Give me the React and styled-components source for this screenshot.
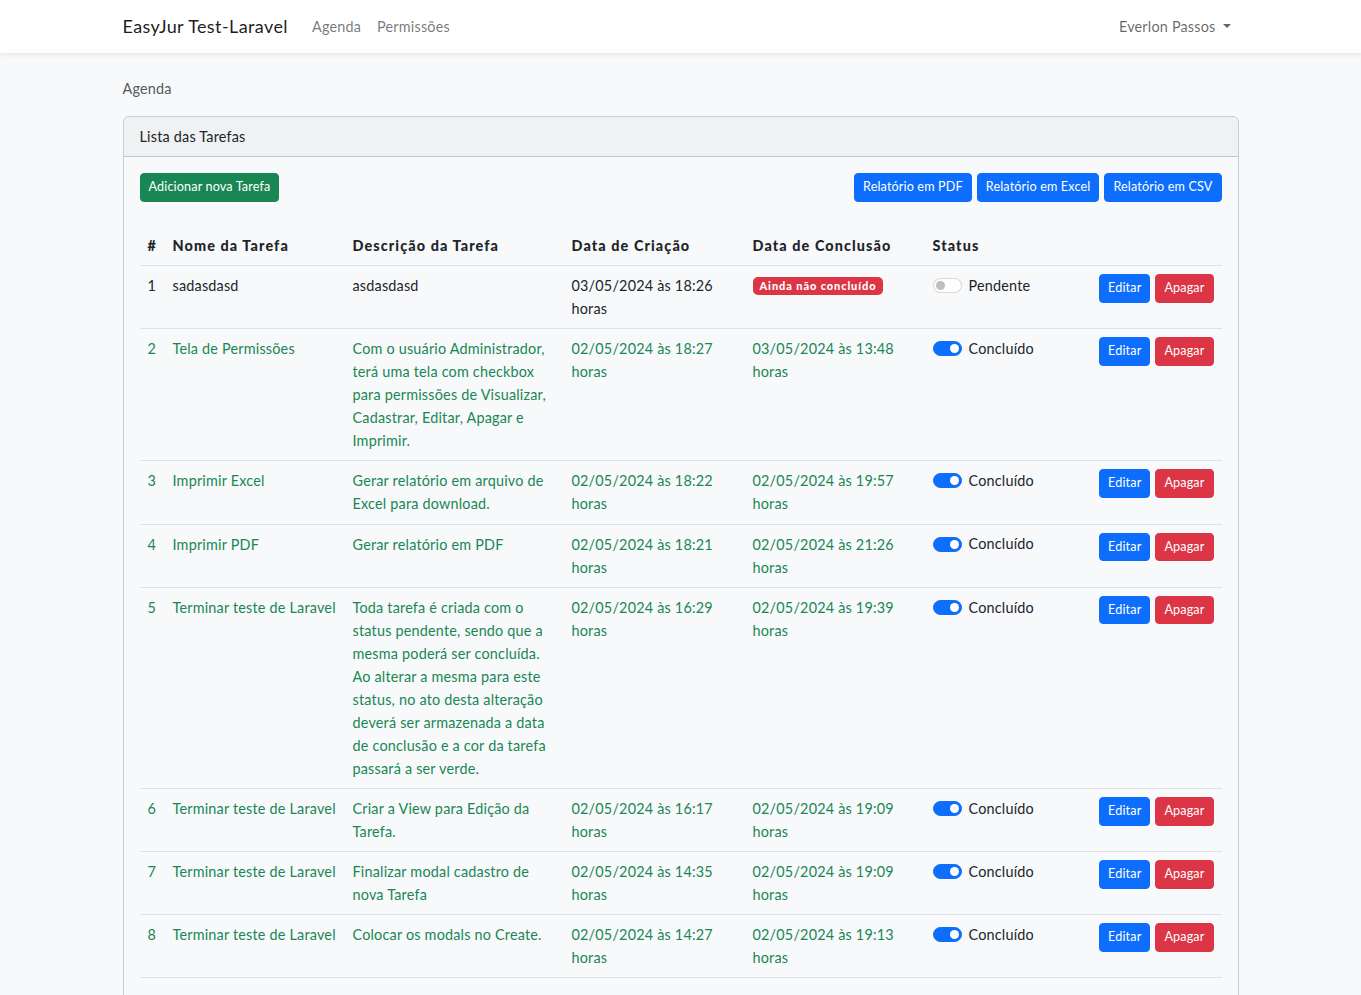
import React from 'react';
import styled, { createGlobalStyle } from 'styled-components';

const tasks = [
  {
    id: 1,
    name: 'sadasdasd',
    description: 'asdasdasd',
    created: '03/05/2024 às 18:26 horas',
    done: false,
  },
  {
    id: 2,
    name: 'Tela de Permissões',
    description:
      'Com o usuário Administrador, terá uma tela com checkbox para permissões de Visualizar, Cadastrar, Editar, Apagar e Imprimir.',
    created: '02/05/2024 às 18:27 horas',
    finished: '03/05/2024 às 13:48 horas',
    done: true,
  },
  {
    id: 3,
    name: 'Imprimir Excel',
    description: 'Gerar relatório em arquivo de Excel para download.',
    created: '02/05/2024 às 18:22 horas',
    finished: '02/05/2024 às 19:57 horas',
    done: true,
  },
  {
    id: 4,
    name: 'Imprimir PDF',
    description: 'Gerar relatório em PDF',
    created: '02/05/2024 às 18:21 horas',
    finished: '02/05/2024 às 21:26 horas',
    done: true,
  },
  {
    id: 5,
    name: 'Terminar teste de Laravel',
    description:
      'Toda tarefa é criada com o status pendente, sendo que a mesma poderá ser concluída. Ao alterar a mesma para este status, no ato desta alteração deverá ser armazenada a data de conclusão e a cor da tarefa passará a ser verde.',
    created: '02/05/2024 às 16:29 horas',
    finished: '02/05/2024 às 19:39 horas',
    done: true,
  },
  {
    id: 6,
    name: 'Terminar teste de Laravel',
    description: 'Criar a View para Edição da Tarefa.',
    created: '02/05/2024 às 16:17 horas',
    finished: '02/05/2024 às 19:09 horas',
    done: true,
  },
  {
    id: 7,
    name: 'Terminar teste de Laravel',
    description: 'Finalizar modal cadastro de nova Tarefa',
    created: '02/05/2024 às 14:35 horas',
    finished: '02/05/2024 às 19:09 horas',
    done: true,
  },
  {
    id: 8,
    name: 'Terminar teste de Laravel',
    description: 'Colocar os modals no Create.',
    created: '02/05/2024 às 14:27 horas',
    finished: '02/05/2024 às 19:13 horas',
    done: true,
  },
];

const App = () => (
  <>
    <GlobalStyle />
    <Navbar>
      <NavContainer>
        <Brand>EasyJur Test-Laravel</Brand>
        <NavLinks>
          <NavLink>Agenda</NavLink>
          <NavLink>Permissões</NavLink>
        </NavLinks>
        <UserMenu>
          Everlon Passos
          <Caret />
        </UserMenu>
      </NavContainer>
    </Navbar>

    <Main>
      <Container>
        <PageLabel>Agenda</PageLabel>
        <Card>
          <CardHeader>Lista das Tarefas</CardHeader>
          <CardBody>
            <Toolbar>
              <Button variant="success">Adicionar nova Tarefa</Button>
              <ButtonGroup>
                <Button>Relatório em PDF</Button>
                <Button>Relatório em Excel</Button>
                <Button>Relatório em CSV</Button>
              </ButtonGroup>
            </Toolbar>

            <Table>
              <colgroup>
                <col style={{ width: 25 }} />
                <col style={{ width: 180 }} />
                <col style={{ width: 219 }} />
                <col style={{ width: 181 }} />
                <col style={{ width: 180 }} />
                <col style={{ width: 165 }} />
                <col />
              </colgroup>
              <thead>
                <tr>
                  <Th>#</Th>
                  <Th>Nome da Tarefa</Th>
                  <Th>Descrição da Tarefa</Th>
                  <Th>Data de Criação</Th>
                  <Th>Data de Conclusão</Th>
                  <Th>Status</Th>
                  <Th />
                </tr>
              </thead>
              <tbody>
                {tasks.map((task) => (
                  <tr key={task.id}>
                    <Td done={task.done}>{task.id}</Td>
                    <Td done={task.done}>{task.name}</Td>
                    <Td done={task.done}>{task.description}</Td>
                    <Td done={task.done}>{task.created}</Td>
                    <Td done={task.done}>
                      {task.done ? task.finished : <Badge>Ainda não concluído</Badge>}
                    </Td>
                    <Td>
                      <SwitchRow>
                        <Switch checked={task.done} />
                        <SwitchLabel>{task.done ? 'Concluído' : 'Pendente'}</SwitchLabel>
                      </SwitchRow>
                    </Td>
                    <ActionsCell>
                      <Button>Editar</Button>
                      <Button variant="danger">Apagar</Button>
                    </ActionsCell>
                  </tr>
                ))}
              </tbody>
            </Table>
          </CardBody>
        </Card>
      </Container>
    </Main>
  </>
);

export default App;

const colors = {
  primary: '#0d6efd',
  success: '#198754',
  danger: '#dc3545',
  text: '#212529',
  border: '#dee2e6',
};

const GlobalStyle = createGlobalStyle`
  html {
    scrollbar-width: none;
  }

  body {
    margin: 0;
    background: #f8f9fb;
    color: ${colors.text};
    font-family: Lato, 'Noto Sans', sans-serif;
    font-size: 14.4px;
    line-height: 1.6;
    letter-spacing: 0.2px;
  }

  * {
    box-sizing: border-box;
  }
`;

const Navbar = styled.nav`
  background: #fff;
  box-shadow: 0 2px 4px rgba(0, 0, 0, 0.075);
  padding: 7px 0;
`;

const Container = styled.div`
  max-width: 1140px;
  margin: 0 auto;
  padding: 0 12px;
`;

const NavContainer = styled(Container)`
  display: flex;
  align-items: center;
`;

const Brand = styled.a`
  font-size: 18px;
  color: rgba(0, 0, 0, 0.9);
  margin-right: 16px;
  padding: 5px 0;
  line-height: 1.6;
  letter-spacing: 0.4px;
`;

const NavLinks = styled.div`
  display: flex;
`;

const NavLink = styled.a`
  color: rgba(0, 0, 0, 0.55);
  padding: 8px;
`;

const UserMenu = styled.a`
  margin-left: auto;
  color: rgba(0, 0, 0, 0.6);
  padding: 8px;
  display: flex;
  align-items: center;
`;

const Caret = styled.span`
  display: inline-block;
  margin-left: 7px;
  margin-bottom: 2px;
  border-top: 4.5px solid rgba(0, 0, 0, 0.6);
  border-left: 4.5px solid transparent;
  border-right: 4.5px solid transparent;
`;

const Main = styled.main`
  padding: 24px 0;
`;

const PageLabel = styled.div`
  color: #55595d;
  margin-bottom: 16px;
`;

const Card = styled.section`
  border: 1px solid rgba(0, 0, 0, 0.175);
  border-radius: 6px;
  overflow: hidden;
`;

const CardHeader = styled.header`
  background: rgba(0, 0, 0, 0.03);
  border-bottom: 1px solid rgba(0, 0, 0, 0.175);
  padding: 8px 16px;
`;

const CardBody = styled.div`
  padding: 16px;
`;

const Toolbar = styled.div`
  display: flex;
  justify-content: space-between;
  align-items: center;
  margin-bottom: 24px;
`;

const ButtonGroup = styled.div`
  display: flex;
  gap: 5px;
`;

const Button = styled.button`
  font-family: inherit;
  font-size: 12.6px;
  line-height: 1.5;
  letter-spacing: 0.15px;
  padding: 4px 8px;
  border-radius: 4px;
  border: 1px solid ${({ variant }) => colors[variant || 'primary']};
  background: ${({ variant }) => colors[variant || 'primary']};
  color: #fff;
  cursor: pointer;
`;

const Table = styled.table`
  width: 100%;
  table-layout: fixed;
  border-collapse: collapse;
  margin-bottom: 16px;
`;

const Th = styled.th`
  text-align: left;
  font-weight: 900;
  letter-spacing: 1.1px;
  padding: 8px;
  border-bottom: 1px solid ${colors.border};
`;

const Td = styled.td`
  vertical-align: top;
  padding: 8px;
  border-bottom: 1px solid ${colors.border};
  color: ${({ done }) => (done ? colors.success : colors.text)};
`;

const ActionsCell = styled(Td)`
  text-align: right;
  white-space: nowrap;

  & > button + button {
    margin-left: 5px;
  }
`;

const Badge = styled.span`
  display: inline-block;
  background: ${colors.danger};
  color: #fff;
  font-size: 11px;
  font-weight: 900;
  letter-spacing: 0.9px;
  line-height: 1;
  padding: 3.5px 7px;
  border-radius: 5px;
  vertical-align: 1px;
`;

const SwitchRow = styled.div`
  display: flex;
  align-items: center;
  gap: 7px;
  height: 23px;
`;

const Switch = styled.span`
  position: relative;
  width: 29px;
  height: 15px;
  border-radius: 8px;
  flex-shrink: 0;
  background: ${({ checked }) => (checked ? colors.primary : '#fff')};
  border: 1px solid ${({ checked }) => (checked ? colors.primary : 'rgba(0, 0, 0, 0.15)')};

  &::after {
    content: '';
    position: absolute;
    top: 2px;
    left: ${({ checked }) => (checked ? '16px' : '2px')};
    width: 9px;
    height: 9px;
    border-radius: 50%;
    background: ${({ checked }) => (checked ? '#fff' : '#bfbfbf')};
  }
`;

const SwitchLabel = styled.span`
  color: ${colors.text};
`;
